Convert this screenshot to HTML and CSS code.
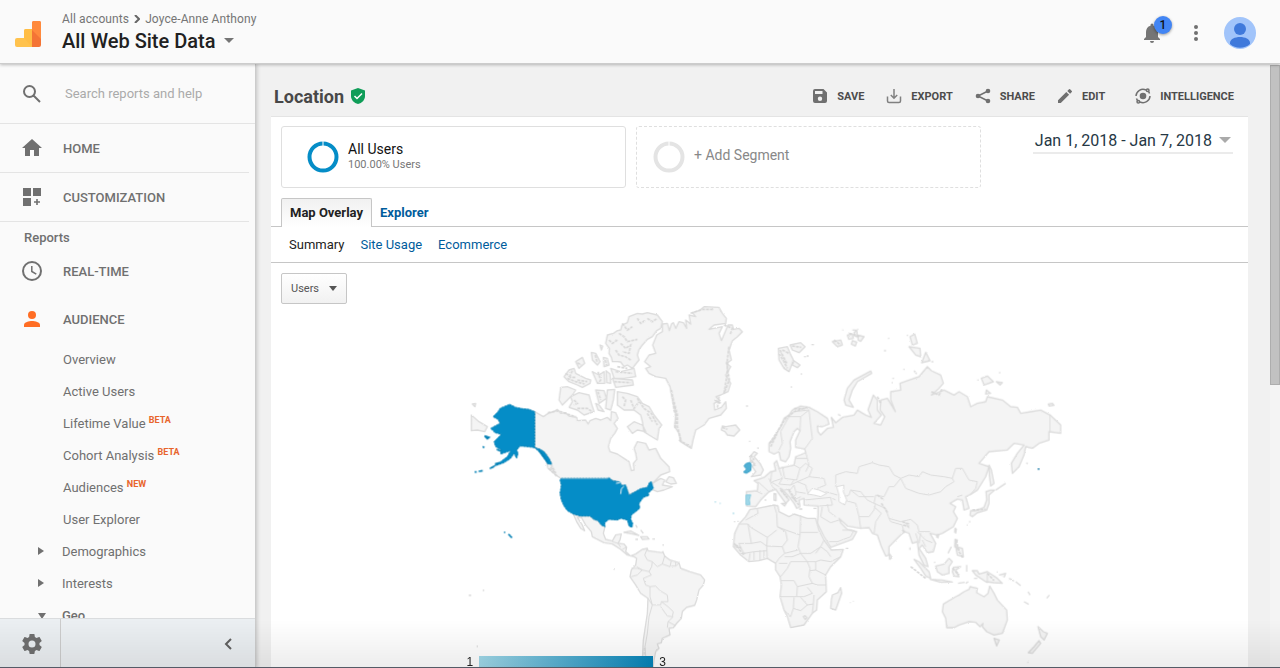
FILE: index.html
```html
<!DOCTYPE html>
<html lang="en">
<head>
<meta charset="utf-8">
<title>Location - Analytics</title>
<link rel="stylesheet" href="styles.css">
</head>
<body>
<div class="app">
  <header class="topbar">
    <svg class="logo" viewBox="0 0 26 26" aria-hidden="true">
      <path d="M2 17h7V10a2 2 0 0 1 2-2h6v18H2a2 2 0 0 1-2-2v-5a2 2 0 0 1 2-2z" fill="#ffc24d"/>
      <path d="M9 17v-7a2 2 0 0 1 2-2h6v18z" fill="#ffbd45"/>
      <path d="M17 2a2 2 0 0 1 2-2h5a2 2 0 0 1 2 2v22a2 2 0 0 1-2 2h-7z" fill="#f47435"/>
      <path d="M17 2a2 2 0 0 1 2-2h5a2 2 0 0 1 2 2v16l-9-9z" fill="#ff8a3d"/>
    </svg>
    <div class="account">
      <nav class="crumbs"><a href="#">All accounts</a><svg viewBox="0 0 6 8" class="crumb-arrow" aria-hidden="true"><path d="M1 0l4 4-4 4" /></svg><a href="#">Joyce-Anne Anthony</a></nav>
      <button class="view-picker">All Web Site Data<span class="caret"></span></button>
    </div>
    <div class="top-actions">
      <button class="bell" aria-label="Notifications">
        <svg viewBox="0 0 16 20" aria-hidden="true"><path d="M8 20a2 2 0 0 0 2-2H6a2 2 0 0 0 2 2zM14 14V9c0-3-1.600-5.600-4.500-6.300V2a1.500 1.500 0 0 0-3 0v.7C3.600 3.400 2 6 2 9v5l-2 2v1h16v-1z"/></svg>
        <span class="count">1</span>
      </button>
      <button class="more" aria-label="More"><svg viewBox="0 0 4 16" aria-hidden="true"><circle cx="2" cy="2" r="2"/><circle cx="2" cy="8" r="2"/><circle cx="2" cy="14" r="2"/></svg></button>
      <button class="avatar" aria-label="Account"><svg viewBox="0 0 32 32" aria-hidden="true"><circle cx="16" cy="16" r="16" fill="#a1c4fa"/><circle cx="16" cy="12" r="6" fill="#3f79db"/><path d="M6 26c0-4 5-6 10-6s10 2 10 6v1a15 15 0 0 1-20 0z" fill="#3f79db"/></svg></button>
    </div>
  </header>

  <div class="body">
    <aside class="sidebar">
      <div class="side-scroll">
        <label class="search">
          <svg class="icon" viewBox="0 0 20 20" aria-hidden="true"><path fill="none" stroke="#707070" stroke-width="2" d="M13 7.500A5.500 5.500 0 1 1 2 7.500a5.500 5.500 0 0 1 11 0zM11.500 11.500l6.500 6.500"/></svg>
          <input type="text" placeholder="Search reports and help" aria-label="Search reports and help">
        </label>
        <a class="item ruled" href="#"><svg class="icon" viewBox="0 0 20 20"><path d="M8 18v-6h4v6h5v-8h3L10 1 0 10h3v8z"/></svg>HOME</a>
        <a class="item ruled" href="#"><svg class="icon" viewBox="0 0 20 20"><path d="M1 1h8v8H1zM11 1h8v8h-8zM1 11h8v8H1zM14.200 12h1.600v2.200H18v1.600h-2.200V18h-1.600v-2.200H12v-1.600h2.200z"/></svg>CUSTOMIZATION</a>
        <div class="group">Reports</div>
        <a class="item" href="#"><svg class="icon" viewBox="0 0 20 20"><circle cx="10" cy="10" r="9" fill="none" stroke="#707070" stroke-width="2"/><path fill="none" stroke="#707070" stroke-width="1.500" d="M9.800 5v5.500l4.500 2.700"/></svg>REAL-TIME</a>
        <a class="item" href="#"><svg class="icon orange" viewBox="0 0 20 20"><circle cx="10" cy="6" r="4"/><path d="M2 18v-2c0-3 5-4 8-4s8 1 8 4v2z"/></svg>AUDIENCE</a>
        <nav class="sub">
          <a href="#">Overview</a>
          <a href="#">Active Users</a>
          <a href="#">Lifetime Value <sup>BETA</sup></a>
          <a href="#">Cohort Analysis <sup>BETA</sup></a>
          <a href="#">Audiences <sup>NEW</sup></a>
          <a href="#">User Explorer</a>
          <a class="tree" href="#"><span class="closed"></span>Demographics</a>
          <a class="tree" href="#"><span class="closed"></span>Interests</a>
          <a class="tree" href="#"><span class="open"></span><b>Geo</b></a>
        </nav>
      </div>
      <div class="side-foot">
        <button class="gear" aria-label="Admin"><svg class="icon" viewBox="2 2 20 20"><path d="M19.430 12.980c.04-.32.07-.64.07-.98s-.03-.66-.07-.98l2.110-1.650c.19-.15.24-.42.12-.64l-2-3.460c-.12-.22-.39-.3-.61-.22l-2.490 1c-.52-.4-1.080-.73-1.690-.98l-.38-2.650C14.460 2.180 14.250 2 14 2h-4c-.25 0-.46.18-.49.42l-.38 2.650c-.61.25-1.170.59-1.690.98l-2.490-1c-.23-.09-.49 0-.61.22l-2 3.460c-.13.22-.07.49.12.64l2.110 1.650c-.04.32-.07.65-.07.98s.03.66.07.98l-2.110 1.650c-.19.15-.24.42-.12.64l2 3.460c.12.22.39.3.61.22l2.490-1c.52.4 1.080.73 1.690.98l.38 2.650c.03.24.24.42.49.42h4c.25 0 .46-.18.49-.42l.38-2.650c.61-.25 1.170-.59 1.690-.98l2.490 1c.23.09.49 0 .61-.22l2-3.460c.12-.22.07-.49-.12-.64zM12 15.500a3.500 3.500 0 1 1 0-7 3.500 3.500 0 0 1 0 7z"/></svg></button>
        <button class="collapse" aria-label="Collapse"><svg viewBox="0 0 8 12" aria-hidden="true"><path d="M7 1L2 6l5 5"/></svg></button>
      </div>
    </aside>

    <main class="content">
      <div class="page-head">
        <h1>Location</h1>
        <svg class="shield" viewBox="0 0 14 16" aria-hidden="true"><path fill="#0f9d58" d="M7 0l7 2.500V8c0 4-3 7-7 8-4-1-7-4-7-8V2.500z"/><path fill="none" stroke="#fff" stroke-width="1.500" d="M3.500 8l2.500 2.500L11 5.500"/></svg>
        <div class="tools">
          <button><svg viewBox="0 0 16 16"><path d="M11.500 1H3a2 2 0 0 0-2 2v10a2 2 0 0 0 2 2h10a2 2 0 0 0 2-2V4.500zM8 13a2.200 2.200 0 1 1 0-4.400A2.200 2.200 0 0 1 8 13zM10.500 6H3V3h7.500z"/></svg>SAVE</button>
          <button><svg viewBox="0 0 16 16"><path fill="none" stroke="#808080" stroke-width="1.500" d="M1.500 8.500v4.500A1.500 1.500 0 0 0 3 14.500h10a1.500 1.500 0 0 0 1.500-1.500V8.500M8 1v9M4.800 7L8 10.200 11.200 7"/></svg>EXPORT</button>
          <button><svg viewBox="0 0 16 16"><path stroke="#707070" stroke-width="1.500" fill="none" d="M13 3L3 8l10 5"/><circle cx="13" cy="3" r="2.300"/><circle cx="3" cy="8" r="2.300"/><circle cx="13" cy="13" r="2.300"/></svg>SHARE</button>
          <button><svg viewBox="0 0 16 16"><path d="M1 12.200V15h2.800l8.300-8.300-2.800-2.800zM14.800 4a.8.8 0 0 0 0-1.100l-1.700-1.700a.8.8 0 0 0-1.100 0l-1.700 1.700 2.800 2.800z"/></svg>EDIT</button>
          <button class="intel"><svg viewBox="0 0 16 16"><circle cx="8" cy="8" r="3.300"/><g fill="none" stroke="#707070" stroke-width="1.500"><path d="M11 2A7 7 0 0 0 1 8M15 8A7 7 0 0 1 5 14M1.500 10.500A7 7 0 0 0 3 13M14.500 5.500A7 7 0 0 0 13.500 3.500"/><circle cx="12.700" cy="2.300" r="1.300"/><circle cx="3.300" cy="13.700" r="1.300"/></g></svg>INTELLIGENCE</button>
        </div>
      </div>

      <section class="card">
        <div class="segments">
          <button class="segment"><svg viewBox="0 0 32 32"><circle cx="16" cy="16" r="13.500" fill="none" stroke="#058dc7" stroke-width="4"/><path stroke="#fff" d="M16 0v5"/></svg><span><span class="seg-name">All Users</span><small>100.00% Users</small></span></button>
          <button class="segment add"><svg viewBox="0 0 32 32"><circle cx="16" cy="16" r="13.500" fill="none" stroke="#e4e4e4" stroke-width="4"/><path stroke="#fff" d="M16 0v5"/></svg><span class="add-name">+ Add Segment</span></button>
          <button class="dates">Jan 1, 2018 - Jan 7, 2018<span class="caret"></span></button>
        </div>
        <nav class="tabs"><a class="on" href="#">Map Overlay</a><a href="#">Explorer</a></nav>
        <nav class="subtabs"><a class="on" href="#">Summary</a><a href="#">Site Usage</a><a href="#">Ecommerce</a></nav>
        <button class="metric">Users<span class="caret"></span></button>

        <div class="map">
          <svg viewBox="-8 0 1812 1200" role="img" aria-label="World map of users">
            <defs>
              <filter id="coast" x="-5%" y="-5%" width="110%" height="110%" color-interpolation-filters="sRGB"><feTurbulence type="fractalNoise" baseFrequency="0.25" numOctaves="3" seed="4"/><feDisplacementMap in="SourceGraphic" scale="5" xChannelSelector="R" yChannelSelector="G"/></filter>
            </defs>
            <g filter="url(#coast)">
            <g class="land">
              <!-- Canada -->
              <path d="M222 335L248 350 262 340 280 335 290 328 300 340 315 338 325 348 348 352 350 362 375 360 382 372 388 362 405 355 420 360 440 352 450 362 452 335 465 338 472 355 460 370 470 385 462 400 450 415 443 440 448 455 470 462 490 475 505 485 512 512 520 510 518 490 528 478 525 460 520 445 530 425 555 430 565 450 585 445 600 475 625 500 627 515 600 525 580 545 575 550 600 535 612 540 605 555 635 560 610 570 590 575 560 562 545 568 530 575 502 585 500 570 490 560 470 545 442 536 302 536 290 528 262 505 258 490 272 490 250 455 222 443z"/>
              <!-- Arctic islands -->
              <path d="M458 100L470 92 480 90 484 75 500 68 505 50 530 40 545 42 560 38 590 45 605 65 600 85 588 92 575 110 560 118 545 135 535 148 530 165 535 180 525 192 515 205 500 195 490 200 480 186 470 185 455 185 452 172 445 160 446 145 435 130 440 105zM392 157L405 160 418 185 410 195 395 180zM428 172L440 175 445 195 430 200zM450 205L480 215 520 205 525 230 490 235 460 235zM455 235L515 240 518 255 465 262zM310 230L325 210 340 205 345 220 375 235 390 240 388 250 365 262 350 255 325 245zM345 185L365 172 372 190 355 205zM300 262L320 260 345 270 335 285 320 300 305 315 295 300zM330 290L355 278 385 285 392 310 400 335 370 345 350 330 325 322 335 305zM405 270L430 272 437 295 415 310zM440 270L462 268 458 300 450 330 435 325zM470 275L500 280 530 290 545 310 565 320 580 345 603 375 595 385 590 420 565 405 550 395 545 365 540 345 520 330 490 330 470 315zM500 380L520 365 545 375 555 395 530 390 515 400zM395 215L415 225 430 215 432 250 410 250zM436 212L448 222 450 250 438 248zM418 135L426 138 422 150zM405 310L415 315 430 335 412 330zM32 345L55 365 80 380 72 395 50 390 32 392zM35 312L45 310 43 320zM625 530L638 533 647 550 630 552 615 545z"/>
              <!-- Greenland, Iceland, Svalbard, British Isles -->
              <g transform="translate(510)">
                <path d="M95 72L110 70 116 92 122 72 128 68 135 85 145 65 158 68 168 85 165 60 180 72 175 45 195 50 185 38 205 32 220 20 265 22 275 40 287 55 285 70 250 75 235 88 275 80 265 100 272 122 292 75 305 75 308 88 325 85 335 95 320 110 305 122 295 150 302 180 288 190 300 200 285 225 300 250 292 275 270 285 256 290 268 302 250 310 252 330 272 322 285 305 287 325 270 345 235 355 220 375 195 390 187 420 182 445 165 435 150 425 145 400 132 380 135 340 125 300 118 260 105 235 75 230 55 220 45 205 60 200 42 185 55 165 75 160 66 135 78 105 95 95zM275 378L285 380 315 375 327 390 310 408 290 405 283 395 272 390zM443 145L470 140 478 160 488 180 475 215 460 205 445 180zM478 135L510 128 523 140 505 158 485 150zM490 182L508 195 500 203 485 195zM358 470L370 455 380 460 370 470 388 490 398 510 390 525 362 530 375 515 365 500 372 490 360 485zM346 318h6M355 424h4M480 261h4M382 442v5M520 170h6M528 168h6M542 134h8M512 220v4"/>
              </g>
              <!-- Europe and Asia -->
              <path d="M925 430L940 415 950 395 960 380 970 355 985 345 995 330 1020 318 1045 322 1070 335 1100 355 1105 372 1085 380 1070 378 1072 395 1080 405 1100 385 1118 382 1112 352 1125 368 1145 352 1180 345 1190 330 1215 345 1232 352 1222 330 1238 285 1250 300 1250 330 1262 345 1240 370 1260 375 1272 350 1258 330 1260 300 1280 295 1304 335 1290 300 1290 275 1320 270 1318 250 1345 240 1375 230 1400 200 1412 212 1440 225 1448 250 1435 265 1412 285 1450 270 1480 285 1495 275 1520 290 1530 320 1550 310 1575 305 1580 290 1625 300 1650 320 1670 322 1680 340 1710 335 1740 330 1768 345 1800 375 1800 400 1765 395 1765 420 1735 430 1715 445 1695 440 1690 465 1675 500 1655 520 1652 490 1670 460 1690 435 1660 430 1640 450 1585 455 1555 490 1585 500 1575 530 1550 570 1530 583 1515 590 1525 625 1510 630 1505 600 1490 597 1468 610 1485 620 1478 635 1490 655 1478 680 1445 700 1430 705 1408 700 1425 730 1418 755 1400 758 1385 735 1375 745 1395 775 1402 800 1390 795 1375 765 1370 725 1355 730 1345 700 1332 695 1320 705 1285 740 1285 765 1275 768 1262 740 1250 705 1235 700 1225 683 1200 685 1160 678 1135 655 1140 668 1160 688 1188 695 1175 718 1110 742 1090 710 1070 670 1072 645 1072 618 1030 615 1030 595 1015 600 1018 620 1008 625 1000 610 985 590 965 568 958 565 985 600 975 610 945 568 925 575 915 585 900 600 885 620 858 618 857 575 890 572 892 550 880 542 910 532 930 515 945 512 940 490 948 482 955 505 1000 495 1005 470 1035 458 1032 447 1005 442 1005 420 1018 392 1010 385 1000 395 988 425 990 445 985 470 975 485 960 480 955 455 940 462 925 455z"/>
              <!-- Arctic Russia -->
              <g transform="translate(1080 60)"><path d="M150 153L153 160 110 185 95 210 85 240 98 262 75 255 70 240 80 205 100 180zM268 50L282 42 290 70 275 75zM265 80L298 85 300 110 285 105zM315 97L328 122 303 128zM482 175L500 168 518 185 490 195zM527 185L545 188 538 195zM497 210L510 220 495 222zM35 65L60 60 65 75 50 80zM80 45L95 42 98 55 84 58zM100 38L108 30 110 50 102 48zM112 45L130 50 120 64 112 60zM95 62L108 66 104 78 92 72zM683 252L695 250 700 256 685 258zM65 30h3M110 28h3M95 30h10M190 92h6M202 55h4M248 148h4M280 152l8 10M215 175h5M213 188h3M30 295h5M52 283l8 4M332 125h6M258 46h4M535 158h4M472 178v4M617 428l4 4"/></g>
              <!-- Central and South America -->
              <g transform="translate(0 480)">
                <path d="M338 162L360 168 388 168 400 178 412 182 422 195 433 200 428 220 435 238 455 243 465 225 482 222 478 240 472 250 490 252 498 262 495 275 510 288 525 282 545 268 560 265 562 272 590 276 608 278 612 288 628 300 655 308 660 325 688 335 720 345 732 360 728 375 715 390 708 420 702 436 678 442 665 455 662 475 648 490 638 503 625 505 628 525 605 535 602 548 590 552 595 565 585 575 580 600 575 640 555 640 545 600 548 540 560 460 562 415 540 400 525 375 508 350 512 330 525 315 528 295 520 290 500 285 480 268 455 252 430 248 395 230 392 215 375 195 362 172 350 172 365 195 372 212 360 205 348 185zM490 217L510 213 535 226 515 222zM540 230L560 230 565 237 545 238zM524 238h8M575 237h8M605 255h5M525 195l5 8M540 210l8 10M605 275h4M24 406h8M66 391h5M48 559h4M458 327h5"/>
              </g>
              <!-- Africa -->
              <g transform="translate(600 450)"><path d="M268 178L290 175 340 165 352 168 355 185 385 200 400 192 440 205 465 205 475 240 490 270 512 300 548 298 540 320 510 350 495 375 497 425 470 450 468 480 455 490 430 525 390 533 380 500 370 480 358 440 362 405 358 380 345 360 345 340 320 325 295 332 265 335 240 315 218 290 222 250 235 222 255 200zM515 435L532 428 540 413 543 430 525 480 510 475 512 450zM340 130l6 2v20l-6-2zM362 160h14l-4 8zM415 177h10M458 175h10M312 150h5M555 295h8M568 458h2M577 454h2M220 215h4M230 214h4M428 500l5 -3 6 6-5 6z"/></g>
              <!-- East Asia and Oceania -->
              <g transform="translate(1200 450)"><path d="M248 462L285 440 295 435 310 425 325 418 328 410 350 415 348 428 370 440 382 430 387 408 400 430 410 450 438 480 440 510 425 550 400 555 378 545 365 530 367 520 358 530 345 517 325 515 295 525 280 533 258 533 255 505 245 485zM400 565L416 570 408 588zM532 530L548 545 560 550 550 570 540 560zM535 572L540 580 515 610 503 608 520 590zM328 195L330 182 345 182 370 172 378 150 376 125 390 120 402 120 385 135 385 160 378 180 350 188 335 200zM385 45L392 60 400 100 390 108 386 75zM160 328L175 335 205 365 210 385 195 378 180 355zM208 388L245 390 275 396 240 397zM225 348L250 342 265 325 275 335 265 350 265 370 245 375 230 365zM278 352L300 350 285 360 295 380 280 378 275 365zM335 362L350 362 355 372 380 365 410 385 425 400 400 398 375 395 345 375zM283 268L290 270 285 285 295 300 282 290zM285 290L305 295 308 320 290 315zM283 235l4 2-2 12-3-3zM228 255l6-2-2 10-4-2zM85 310L94 322 87 328zM262 310l10-20M318 345v20M292 400l20 -3M315 400l8 -5M415 375L435 370 430 382M445 385l15 8M465 395l15 12M502 425l6 10M490 455l14 8M558 445l8-10M148 292v8M325 215h4M318 225h3M405 120l30-20M220 337h4M500 637h3M408 366h3M340 385h10"/></g>
            </g>
            <!-- Country borders -->
            <g class="border">
              <g transform="translate(0 480)"><path d="M560 266L552 285 560 300 575 305 573 320 565 335 572 345 548 355 555 375 568 380 585 378 598 392 620 405 622 425 602 425 600 435 575 435 568 410 568 380M512 325L530 325 545 330 530 345 512 350M528 320L545 330 567 335M575 305L590 320 605 312 612 288M605 312L628 320 632 302M632 318L645 318 645 305M645 318L655 310M602 425L622 440 638 455 635 470 620 468 600 440M638 470L622 485 620 503M622 485L645 497M575 435L565 470 560 520 553 560 556 600M455 245L472 250 480 262M485 268L497 262M562 415L575 435"/></g>
              <g transform="translate(600 450)"><path d="M290 175L292 190 255 210M235 222L262 222 270 232M262 222L272 280 235 280M270 232L320 262 348 240M340 165L348 190 350 230 375 245M350 230L375 240 418 255 420 195M420 247L472 247M418 255L412 290 420 310 450 310 480 290 490 270M320 262L318 288 365 290 380 270 375 245M272 280L300 275 318 288 320 325M365 290L372 310 355 325 345 340M372 310L412 300M372 320L395 320 420 310 440 335 390 335 380 355 360 380M355 340L380 340M440 335L465 335 480 330 510 335 540 320M465 310L480 290M480 290L500 305 510 320M440 335L448 355 445 380 455 400 410 410 400 392 362 392M465 335L465 360 495 375M448 362L465 360M455 400L470 405 497 405M410 410L408 440 358 440M408 440L430 440 455 430 440 412M400 442L398 475 390 500 370 480M398 475L420 482 440 465 420 442M440 465L458 462 460 435M458 462L455 490M298 300v30M280 305v25M268 310L265 335M218 290L240 292 235 280M240 292L250 310 280 305 320 302M310 300v25M240 310L255 310"/></g>
              <!-- Europe -->
              <path d="M892 545L925 575M925 535L935 560 945 568M933 515L930 545 955 560M955 505L965 535 935 545M965 500L972 535 1008 540 1018 505M1018 505L1000 495M965 535L955 552 990 555 1000 540M990 555L1010 545 1035 555 1042 580M1000 555L1005 575 1035 580M1010 545L1045 530 1090 535 1095 555 1070 565M1045 530L1055 505 1035 490 1018 505M1005 475L1040 475 1035 458M1040 475L1045 495M1045 495L1035 515M970 570L990 568 1000 555M980 565L1000 600 1020 590M990 595L1005 585 1005 575M955 450L965 430 960 395 985 350 1020 350M1020 350L1018 392M1020 350L1045 330 1050 375 1055 415 1032 447M985 350L1000 335 1045 330M886 573L905 582M1030 600L1110 592 1115 615 1075 618M1080 590L1070 575M1115 595L1125 600M1095 575L1130 585"/>
              <!-- Asia -->
              <path d="M1125 560L1125 525 1155 515 1190 520 1195 500 1235 488 1255 495 1285 500 1300 525 1320 535 1300 560 1285 560 1270 590 1245 585 1240 610 1220 600 1200 575 1170 570 1165 585 1150 590M1320 535L1345 525 1375 530 1385 515 1410 525 1450 530 1475 535 1480 545 1455 560 1440 575 1405 585 1375 580 1335 565 1320 535M1475 535L1485 505 1505 505 1525 540 1550 545 1545 565 1530 583M1150 600L1185 610 1195 650 1200 685M1195 650L1225 650 1240 630 1245 610M1240 610L1275 625 1285 655 1320 665 1350 658 1370 675 1375 695 1408 695M1285 655L1290 665 1325 675 1330 700M1335 668L1345 685M1240 620L1262 640 1245 665 1240 700M1370 695L1385 710 1395 720 1415 728M1380 700L1375 730 1365 700M1385 720L1395 740M1100 612L1105 635 1125 650M1085 620L1080 650 1110 668 1135 660M1180 690L1170 710 1130 725 1105 725M1145 690L1175 690M1768 345L1768 395M1170 570L1195 590 1240 590M1490 590L1505 585M1580 820v30"/>
            </g>
            <g class="water"><path d="M1040 582L1055 565 1075 570 1098 580 1080 590 1060 585zM1128 560L1150 555 1148 575 1158 600 1152 615 1135 605 1135 585z"/></g>
            <!-- Fringed shorelines and fjords -->
            <path class="fringe" d="M445 120L455 130 470 120M475 100L490 110 500 125 530 118M480 130L495 145 510 135 505 160 485 155M465 150L475 165 495 170 510 180M485 70L500 90 515 80M530 55L540 70 555 60M560 55L575 65 590 55M315 220L330 232 345 232M350 240L380 245M320 235L345 245 372 252M335 212L328 228M412 215L420 240 412 250M404 165L410 188M434 180L438 195M350 188L362 195M412 275L420 300M470 200L500 205M460 245L510 248M465 215L515 220M485 290L495 300 490 320M510 300L520 325 535 305M530 295L550 325 572 340 590 375M560 340L575 365M340 300L350 310 340 315M350 325L380 325 395 335M262 338L292 332 320 342 345 350M265 505L290 530M255 460L285 520M270 500L280 515M632 270L638 300 640 330 648 350 643 385M640 305L650 345 650 380 662 425M655 420L690 440M805 140L800 180 800 220 790 280M798 185L806 240 792 275M790 75L815 85 808 105M690 40L725 28 760 28M775 290L770 325M762 300L780 310M785 382L800 388M955 160L970 185 980 205M965 150L985 160M958 150L978 190M994 138L1022 142M927 430L950 395 975 355 1000 335 1040 322M930 440L948 402M1000 326L1035 326M565 1160L548 1140 555 1080M545 1160L552 1040M1250 290L1260 310M1120 120L1140 135M1165 100L1200 110M820 730L850 765M825 735L842 745M1580 820L1600 842M570 1100L550 1120M872 480L885 500M870 465L880 480M1325 665L1345 672M1328 675L1345 680M1325 690L1335 698M985 570L1005 600M995 590L1015 615M960 570L980 592M1250 585L1270 600M1262 610L1282 640M1486 720L1495 755 1508 775M1476 805L1495 825M1412 275L1435 285 1445 265M1535 630L1575 628M1350 800L1395 835"/>
            </g>
            <g class="hot">
              <path d="M222 335L205 328 185 326 165 322 147 313 118 325 112 335 97 350 112 358 118 370 90 385 103 398 122 403 100 425 105 440 122 450 120 462 150 452 140 470 120 485 88 505 105 497 130 488 150 475 160 460 168 475 172 460 168 450 178 438 200 440 222 443 237 447 250 455 265 475 273 492 262 492 248 472 235 455 222 443zM302 535L442 535 445 533 455 542 478 546 482 556 495 555 500 570 505 585 520 577 540 566 560 562 566 548 572 545 578 565 562 580 565 586 548 592 535 610 537 625 525 635 512 645 510 658 516 670 514 682 505 678 500 660 480 655 470 660 445 658 432 668 433 680 422 675 412 662 400 658 388 648 360 648 338 642 320 632 310 618 302 600 298 580 302 555 298 540z"/>
              <path class="isles" d="M72 408L85 412 80 416zM66 440l5 3M42 516h6M54 514l12-2M130 697h4M143 703l6 4M148 708l6 5M88 505l12-5M103 492l14 -4M108 448l14 6M235 450l28 40"/>
            </g>
            <path class="far" d="M1731 507h6"/>
            <path d="M302 535H442" stroke="#ccdce3" stroke-width="2"/>
            <path d="M480 582l2-16 8-7M466 550l12-2" stroke="#f5f5f5" stroke-width="3" fill="none"/>
            <path class="mid" d="M855 491L868 487 872 495 870 512 857 520 848 516 858 508 850 498z"/>
            <path class="low" d="M856 585L870 584 866 600 868 614 856 614zM762 606h4M777 610h3M816 640h5"/>
            </g>
          </svg>
          <div class="legend"><span>1</span><i></i><span>3</span></div>
        </div>
      </section>
    </main>
    <div class="scrollbar"><div class="thumb"></div></div>
  </div>
  <div class="bottom-shade"></div>
</div>
</body>
</html>
```
FILE: styles.css
```css
* { box-sizing: border-box; }
body { margin: 0; font-family: Roboto, "Liberation Sans", sans-serif; font-size: 13px; color: #222; }
button { font: inherit; color: inherit; background: none; border: 0; padding: 0; }
a { color: inherit; text-decoration: none; }
svg { display: block; flex: none; }
.app { height: 100vh; display: flex; flex-direction: column; overflow: hidden; position: relative; }
.caret { border: 5px solid transparent; border-top-color: #757575; border-bottom: 0; }

.topbar { position: relative; z-index: 2; flex: none; height: 64px; display: flex; align-items: center; padding: 2px 24px 0 15px; background: #fafafa; border-bottom: 1px solid #ccc; box-shadow: 0 1px 3px rgba(0,0,0,.25); }
.logo { width: 26px; height: 26px; margin: 2px 21px 0 0; }
.account { display: flex; flex-direction: column; align-items: flex-start; }
.crumbs { display: flex; align-items: center; font-size: 12px; line-height: 16px; color: #757575; letter-spacing: .1px; }
.crumb-arrow { width: 6px; height: 8px; margin: 0 5px; fill: none; stroke: #666; stroke-width: 2; }
.view-picker { display: flex; align-items: center; gap: 8px; font-size: 20px; font-weight: 500; line-height: 28px; color: #212121; }
.top-actions { margin-left: auto; display: flex; align-items: center; }
.bell { position: relative; fill: #757575; }
.bell svg { width: 16px; height: 20px; }
.count { position: absolute; left: 10px; top: -7px; width: 18px; height: 18px; border-radius: 50%; background: #4285f4; color: #111; font-size: 12px; font-weight: 500; line-height: 18px; text-align: center; box-shadow: 0 1px 3px rgba(0,0,0,.4); }
.more { margin: 0 26px 0 34px; fill: #707070; }
.more svg { width: 4px; height: 16px; }
.avatar svg { width: 32px; height: 32px; }

.body { flex: 1; min-height: 0; display: flex; background: #f1f1f1; }
.sidebar { position: relative; z-index: 1; width: 256px; flex: none; display: flex; flex-direction: column; background: #fafafa; border-right: 1px solid #ccc; box-shadow: 1px 0 4px rgba(0,0,0,.2); color: #707070; }
.side-scroll { flex: 1; min-height: 0; overflow: hidden; }
.icon { width: 20px; height: 20px; fill: #707070; }
.orange { fill: #ff6d24; }
.search { display: flex; align-items: center; gap: 23px; height: 60px; padding: 0 22px; border-bottom: 1px solid #e4e4e4; }
.search input { width: 170px; padding: 0; border: 0; background: none; font: inherit; outline: 0; }
.search input::placeholder { color: #aaa; opacity: 1; }
.item { display: flex; align-items: center; gap: 21px; height: 48px; padding-left: 22px; font-weight: 500; }
.ruled { height: 49px; margin-right: 6px; border-bottom: 1px solid #e4e4e4; }
.group { padding: 8px 24px 1px; line-height: 16px; font-weight: 500; }
.sub a { display: flex; align-items: center; height: 32px; padding-left: 63px; white-space: pre; }
.sub sup { font-size: 9px; line-height: 10px; font-weight: 700; color: #e8642c; align-self: flex-start; margin-top: 8px; }
.sub .tree { padding-left: 38px; }
.closed { border: 4px solid transparent; border-left: 6px solid #707070; border-right: 0; margin-right: 18px; }
.open { border: 4px solid transparent; border-top: 6px solid #707070; border-bottom: 0; margin: 2px 16px 0 0; }
.sub b { font-weight: 500; }
.side-foot { flex: none; height: 50px; display: flex; background: #ebeff2; border-top: 1px solid #dadcde; }
.gear { width: 61px; display: flex; align-items: center; padding-left: 22px; border-right: 1px solid #ccc; }
.collapse { margin-left: auto; padding-right: 23px; }
.collapse svg { width: 8px; height: 12px; fill: none; stroke: #616161; stroke-width: 2; }

.content { flex: 1; min-width: 0; padding: 0 22px 0 15px; overflow: hidden; }
.page-head { display: flex; align-items: center; height: 52px; padding: 12px 14px 0 3px; }
h1 { margin: 2px 7px 0 0; font-size: 18px; font-weight: 700; line-height: 24px; color: #484848; }
.shield { width: 14px; height: 16px; }
.tools { margin-left: auto; display: flex; gap: 22px; }
.tools button { display: flex; align-items: center; gap: 9px; font-size: 11px; font-weight: 700; color: #4c4c4c; }
.tools svg { width: 16px; height: 16px; fill: #707070; }
.tools .intel { margin-left: 8px; }
.card { background: #fff; border-top: 1px solid #e4e4e4; min-height: 100vh; }
.segments { display: flex; gap: 10px; padding: 9px 15px 0 10px; }
.segment { flex: 0 1 345px; height: 62px; display: flex; align-items: center; gap: 9px; padding: 0 25px; border: 1px solid #dfdfdf; border-radius: 3px; text-align: left; font-size: 14px; color: #111; }
.segment svg { width: 32px; height: 32px; }
.seg-name { display: block; line-height: 16px; }
.segment small { display: block; font-size: 11px; line-height: 16px; color: #777; }
.add { padding-left: 16px; border-style: dashed; color: #888; }
.add-name { padding-bottom: 5px; }
.dates { align-self: flex-start; margin-left: auto; display: flex; align-items: center; gap: 7px; padding: 2px 2px 0; height: 28px; font-size: 16px; color: #263845; border-bottom: 2px solid #ebebeb; white-space: nowrap; }
.dates .caret { border-width: 6px 6px 0; border-top-color: #aaa; }
.tabs { display: flex; padding: 10px 10px 0; border-bottom: 1px solid #c6c6c6; font-weight: 700; color: #005c9c; }
.tabs a { height: 28px; line-height: 29px; padding: 0 8px; }
.tabs .on { height: 29px; line-height: 28px; margin-bottom: -1px; border: 1px solid #c6c6c6; border-bottom: 0; border-radius: 2px 2px 0 0; background: linear-gradient(#f1f1f1, #fff); color: #222; }
.subtabs { display: flex; gap: 16px; padding: 0 18px; height: 36px; line-height: 35px; border-bottom: 1px solid #c6c6c6; color: #005c9c; }
.subtabs .on { color: #222; }
.metric { display: flex; align-items: center; gap: 10px; height: 31px; margin: 10px 10px 0; padding: 0 9px; border: 1px solid #c6c6c6; border-radius: 2px; background: linear-gradient(#fff, #f1f1f1); font-size: 11px; color: #555; }
.metric .caret { border-width: 5px 4px 0; border-top-color: #555; }

.map { position: relative; max-width: 604px; margin: -4px auto 0; }
.map > svg { width: 100%; height: auto; }
.land { fill: #f4f4f4; stroke: #dcdcdc; stroke-width: 4; stroke-linejoin: round; }
.border { fill: none; stroke: #dcdcdc; stroke-width: 3; stroke-linejoin: round; }
.fringe { fill: none; stroke: #d8d8d8; stroke-width: 5; stroke-dasharray: 9 3; }
.water { fill: #fff; stroke: #dcdcdc; stroke-width: 3; }
.hot { fill: #058dc7; stroke: #0580b4; stroke-width: 3; stroke-dasharray: 7 2; }
.isles { stroke-width: 5; stroke-dasharray: none; }
.far { stroke: #0870a0; stroke-width: 4; }
.mid { fill: #50b0d4; stroke: #3a9fc6; stroke-width: 3; }
.low { fill: #a0d8ea; stroke: #8accdf; stroke-width: 3; }
.legend { position: absolute; left: 9px; top: 355px; display: flex; gap: 6px; font: 12px/14px "Liberation Sans", sans-serif; color: #222; }
.legend i { width: 174px; height: 14px; margin-top: 1px; background: linear-gradient(90deg, #a0d8e8, #0583b8); }
.scrollbar { flex: none; width: 10px; background: #f4f4f4; padding-top: 1px; }
.thumb { height: 53%; background: #c1c1c1; border: 1px solid #adadad; }
.bottom-shade { position: absolute; z-index: 5; left: 0; right: 0; bottom: 0; height: 48px; border-bottom: 1px solid #555b66; background: linear-gradient(rgba(0,0,0,0), rgba(0,0,0,.07)); pointer-events: none; }
```
